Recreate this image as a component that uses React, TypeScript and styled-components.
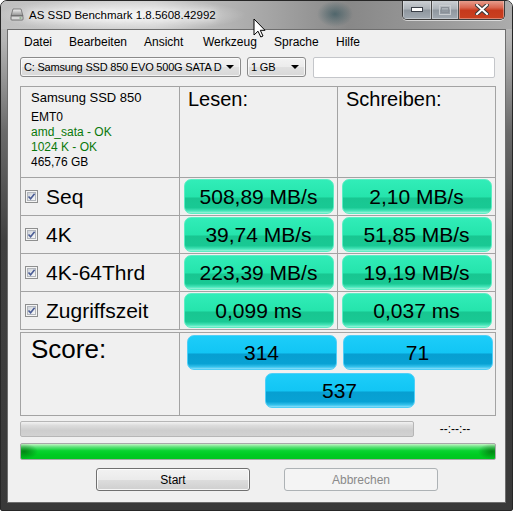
import React from 'react'
import styled, { createGlobalStyle } from 'styled-components'

const GlobalStyle = createGlobalStyle`
  html, body { margin: 0; padding: 0; background: #fff; }
  body { font-family: "Liberation Sans", Arial, sans-serif; }
  * { box-sizing: border-box; }
`

const Window = styled.div`
  position: relative;
  width: 513px;
  height: 511px;
  display: flex;
  flex-direction: column;
  border: 1px solid #262626;
  border-radius: 7px 7px 2px 2px;
  overflow: hidden;
  background: linear-gradient(180deg, #c6c6c6 0px, #b4b4b4 40px, #6a6a6a 130px, #404040 240px, #393939 100%);
`

const TitleBar = styled.div`
  height: 28px;
  flex: none;
  display: flex;
  align-items: flex-start;
  background:
    radial-gradient(ellipse 125px 17px at 120px 14px, rgba(255, 255, 255, 0.9), rgba(255, 255, 255, 0) 100%),
    radial-gradient(ellipse 18px 13px at 334px 13px, rgba(30, 70, 80, 0.55), rgba(30, 70, 80, 0) 100%),
    linear-gradient(90deg, #c0c0c0 0%, #cbcbcb 30%, #a6a6a6 52%, #888888 68%, #969696 82%, #acacac 100%);
`

const AppIcon = styled.svg`
  margin: 7px 0 0 9px;
  flex: none;
`

const Title = styled.div`
  margin-left: 5px;
  line-height: 28px;
  font-size: 11.5px;
  color: #000;
  text-shadow: 0 0 6px #fff, 0 0 10px #fff;
`

const CaptionButtons = styled.div`
  margin: -1px 7px 0 auto;
  display: flex;
  height: 20px;
  border: 1px solid #3c3c3c;
  border-top: none;
  border-radius: 0 0 5px 5px;
  overflow: hidden;
  box-shadow: 0 1px 0 rgba(255, 255, 255, 0.6);
`

const CaptionButton = styled.div<{ $w: number; $close?: boolean }>`
  width: ${p => p.$w}px;
  display: flex;
  align-items: center;
  justify-content: center;
  border-left: ${p => (p.$close ? '1px solid #5a3028' : 'none')};
  & + & { border-left: 1px solid #4a4a4a; }
  background: ${p =>
    p.$close
      ? 'linear-gradient(180deg, #e8a596 0%, #d8664f 40%, #c6391c 55%, #c9401f 100%)'
      : 'linear-gradient(180deg, #cfd3d7 0%, #aeb4ba 45%, #8f979f 55%, #a2aab2 100%)'};
  box-shadow: inset 0 0 0 1px rgba(255, 255, 255, 0.35);
`

const Client = styled.div`
  flex: 1;
  margin: 0 6px 7px;
  border: 1px solid #6e6e6e;
  background: #f0f0f0;
  display: flex;
  flex-direction: column;
`

const MenuBar = styled.div`
  height: 22px;
  display: flex;
  align-items: center;
  padding: 2px 0 0 9px;
  font-size: 12px;
  color: #000;
`

const MenuItem = styled.div<{ $w: number }>`
  width: ${p => p.$w}px;
  padding-left: 7px;
`

const Body = styled.div`
  padding-left: 12px;
  display: flex;
  flex-direction: column;
`

const ToolRow = styled.div`
  margin-top: 5px;
  height: 21px;
  display: flex;
  align-items: flex-start;
`

const Combo = styled.div<{ $w: number; $ml?: number }>`
  width: ${p => p.$w}px;
  height: 20px;
  margin-left: ${p => p.$ml ?? 0}px;
  border: 1px solid #8a8a8a;
  border-radius: 3px;
  background: linear-gradient(180deg, #f3f3f3 0%, #ececec 50%, #e0e0e0 51%, #d8d8d8 100%);
  box-shadow: inset 0 0 0 1px rgba(255, 255, 255, 0.7);
  display: flex;
  align-items: center;
  padding: 0 6px 0 3px;
  font-size: 11px;
  letter-spacing: -0.2px;
  color: #000;
`

const ComboText = styled.div`
  flex: 1;
  overflow: hidden;
  white-space: nowrap;
`

const Arrow = styled.div`
  flex: none;
  width: 0;
  height: 0;
  margin-left: 4px;
  border-left: 4px solid transparent;
  border-right: 4px solid transparent;
  border-top: 4px solid #000;
`

const TextBox = styled.div`
  margin-left: 7px;
  width: 182px;
  height: 21px;
  background: #fff;
  border: 1px solid #c4c6ca;
  border-radius: 2px;
`

const MainGrid = styled.div`
  margin-top: 8px;
  width: 476px;
  display: grid;
  grid-template-columns: 158px 157px 157px;
  grid-template-rows: 90px repeat(4, 37px);
  gap: 1px;
  padding: 1px;
  background: #a3a3a3;
`

const ScoreGrid = styled.div`
  margin-top: 2px;
  width: 476px;
  display: grid;
  grid-template-columns: 158px 315px;
  grid-template-rows: 82px;
  gap: 1px;
  padding: 1px;
  background: #a3a3a3;
`

const Cell = styled.div`
  background: #f0f0f0;
  display: flex;
  align-items: center;
  justify-content: center;
`

const InfoCell = styled(Cell)`
  flex-direction: column;
  align-items: flex-start;
  justify-content: flex-start;
  padding: 3px 0 0 10px;
`

const DriveName = styled.div`
  font-size: 13px;
  line-height: 16px;
  margin-bottom: 4px;
`

const InfoLine = styled.div<{ $ok?: boolean }>`
  font-size: 12px;
  line-height: 15px;
  color: ${p => (p.$ok ? '#0a780a' : '#000')};
`

const HeadCell = styled(Cell)`
  align-items: flex-start;
  justify-content: flex-start;
  padding: 1px 0 0 8px;
  font-size: 20px;
  line-height: 22px;
`

const LabelCell = styled(Cell)`
  justify-content: flex-start;
  padding-left: 4px;
  font-size: 21px;
  gap: 8px;
`

const CheckBox = styled.span`
  width: 13px;
  height: 13px;
  flex: none;
  border: 1px solid #8e8f8f;
  background: #f4f4f4;
  display: flex;
  align-items: center;
  justify-content: center;
  padding: 1px;
`

const CheckInner = styled.span`
  width: 9px;
  height: 9px;
  border: 1px solid #b2b6bc;
  background: linear-gradient(135deg, #cdd1d8 0%, #eceef0 70%, #f8f8f8 100%);
  position: relative;
  display: block;
`

const Tick = styled.svg`
  position: absolute;
  left: -1px;
  top: -1px;
`

const Pill = styled.div<{ $tone: 'green' | 'blue' }>`
  width: 150px;
  height: 35px;
  border-radius: 7px;
  display: flex;
  align-items: center;
  justify-content: center;
  font-size: 21px;
  color: #000;
  border: 1px solid ${p => (p.$tone === 'green' ? '#5aeec3' : '#4fcff7')};
  background: ${p =>
    p.$tone === 'green'
      ? 'linear-gradient(180deg, #31edb8 0%, #25e4ac 52%, #18c691 54%, #19c994 84%, #48e7bb 94%, #9ef4da 100%)'
      : 'linear-gradient(180deg, #1ccdf9 0%, #12c5f4 52%, #079fd1 54%, #08a2d4 84%, #37c4ee 94%, #8fe0fa 100%)'};
`

const ScoreLabel = styled(Cell)`
  align-items: flex-start;
  justify-content: flex-start;
  padding: 1px 0 0 10px;
  font-size: 26px;
  line-height: 30px;
`

const ScoreCell = styled(Cell)`
  align-items: flex-start;
  padding-top: 2px;
`

const ScoreBoxes = styled.div`
  display: grid;
  grid-template-columns: 150px 150px;
  column-gap: 6px;
  row-gap: 3px;
  margin-left: 4px;
  & > :nth-child(3) {
    grid-column: 1 / -1;
    justify-self: center;
  }
`

const ProgressRow = styled.div`
  margin-top: 5px;
  height: 16px;
  width: 476px;
  display: flex;
  align-items: center;
`

const EmptyBar = styled.div`
  width: 394px;
  height: 16px;
  border: 1px solid #b6b6b6;
  border-radius: 2px;
  background: linear-gradient(180deg, #f2f2f2 0%, #dcdcdc 25%, #cdcdcd 60%, #d2d2d2 100%);
`

const TimeText = styled.div`
  flex: 1;
  text-align: center;
  font-size: 12px;
  color: #000;
`

const FullBar = styled.div`
  margin-top: 6px;
  width: 476px;
  height: 17px;
  border: 1px solid #a8a8a8;
  border-radius: 2px;
  background:
    radial-gradient(ellipse 14px 8px at 3px 50%, rgba(0, 70, 0, 0.55), rgba(0, 70, 0, 0)),
    radial-gradient(ellipse 14px 8px at calc(100% - 3px) 50%, rgba(0, 70, 0, 0.55), rgba(0, 70, 0, 0)),
    linear-gradient(180deg, #c6f5c6 0%, #5fe27a 20%, #09d330 45%, #00cc23 70%, #00c620 100%);
`

const ButtonRow = styled.div`
  margin-top: 8px;
  padding-left: 76px;
  display: flex;
  gap: 34px;
`

const Button = styled.div<{ $disabled?: boolean }>`
  width: 154px;
  height: 23px;
  border-radius: 3px;
  display: flex;
  align-items: center;
  justify-content: center;
  font-size: 12px;
  border: 1px solid ${p => (p.$disabled ? '#adb2b5' : '#707070')};
  color: ${p => (p.$disabled ? '#8a8a8a' : '#000')};
  background: ${p =>
    p.$disabled ? '#f4f4f4' : 'linear-gradient(180deg, #f2f2f2 0%, #ebebeb 50%, #dddddd 51%, #cfcfcf 100%)'};
  box-shadow: ${p => (p.$disabled ? 'none' : 'inset 0 0 0 1px rgba(255, 255, 255, 0.8)')};
`

const Cursor = styled.svg`
  position: absolute;
  left: 252px;
  top: 17px;
`

const menu: [string, number][] = [
  ['Datei', 45],
  ['Bearbeiten', 75],
  ['Ansicht', 59],
  ['Werkzeug', 71],
  ['Sprache', 62],
  ['Hilfe', 40],
]

const rows = [
  { name: 'Seq', read: '508,89 MB/s', write: '2,10 MB/s' },
  { name: '4K', read: '39,74 MB/s', write: '51,85 MB/s' },
  { name: '4K-64Thrd', read: '223,39 MB/s', write: '19,19 MB/s' },
  { name: 'Zugriffszeit', read: '0,099 ms', write: '0,037 ms' },
]

const Check = () => (
  <CheckBox>
    <CheckInner>
      <Tick width="9" height="9" viewBox="0 0 9 9">
        <path d="M1.5 4.5 L3.6 6.8 L7.6 1.8" fill="none" stroke="#4b5d95" strokeWidth="1.6" />
      </Tick>
    </CheckInner>
  </CheckBox>
)

export default function App() {
  return (
    <>
      <GlobalStyle />
      <Window>
        <TitleBar>
          <AppIcon width="14" height="13" viewBox="0 0 14 13">
            <defs>
              <linearGradient id="hdd" x1="0" y1="0" x2="0" y2="1">
                <stop offset="0" stopColor="#f4f4f4" />
                <stop offset="1" stopColor="#8a8a8a" />
              </linearGradient>
            </defs>
            <path d="M3 1 H11 L13 8 H1 Z" fill="url(#hdd)" stroke="#6a6a6a" strokeWidth="0.8" />
            <rect x="1" y="8" width="12" height="4" rx="0.8" fill="#d8d8d8" stroke="#5a5a5a" strokeWidth="0.8" />
            <rect x="9.5" y="9.4" width="2" height="1.2" fill="#6c9c6c" />
          </AppIcon>
          <Title>AS SSD Benchmark 1.8.5608.42992</Title>
          <CaptionButtons>
            <CaptionButton $w={28}>
              <svg width="12" height="5" viewBox="0 0 12 5">
                <rect x="0.5" y="0.5" width="11" height="4" fill="#fff" stroke="#3a3f48" />
              </svg>
            </CaptionButton>
            <CaptionButton $w={27}>
              <svg width="12" height="10" viewBox="0 0 12 10">
                <rect x="0.5" y="0.5" width="11" height="9" fill="none" stroke="#c8ccd0" />
                <rect x="2.5" y="2.5" width="7" height="5" fill="none" stroke="#8a9098" />
              </svg>
            </CaptionButton>
            <CaptionButton $w={46} $close>
              <svg width="14" height="11" viewBox="0 0 14 11">
                <path d="M2 1 L12 10 M12 1 L2 10" stroke="#3a3a3a" strokeWidth="4" strokeLinecap="square" />
                <path d="M2 1 L12 10 M12 1 L2 10" stroke="#fff" strokeWidth="2" strokeLinecap="square" />
              </svg>
            </CaptionButton>
          </CaptionButtons>
        </TitleBar>
        <Client>
          <MenuBar>
            {menu.map(([label, w]) => (
              <MenuItem key={label} $w={w}>
                {label}
              </MenuItem>
            ))}
          </MenuBar>
          <Body>
            <ToolRow>
              <Combo $w={221}>
                <ComboText>C: Samsung SSD 850 EVO 500G SATA D</ComboText>
                <Arrow />
              </Combo>
              <Combo $w={59} $ml={6}>
                <ComboText>1 GB</ComboText>
                <Arrow />
              </Combo>
              <TextBox />
            </ToolRow>
            <MainGrid>
              <InfoCell>
                <DriveName>Samsung SSD 850</DriveName>
                <InfoLine>EMT0</InfoLine>
                <InfoLine $ok>amd_sata - OK</InfoLine>
                <InfoLine $ok>1024 K - OK</InfoLine>
                <InfoLine>465,76 GB</InfoLine>
              </InfoCell>
              <HeadCell>Lesen:</HeadCell>
              <HeadCell>Schreiben:</HeadCell>
              {rows.map(r => (
                <React.Fragment key={r.name}>
                  <LabelCell>
                    <Check />
                    {r.name}
                  </LabelCell>
                  <Cell>
                    <Pill $tone="green">{r.read}</Pill>
                  </Cell>
                  <Cell>
                    <Pill $tone="green">{r.write}</Pill>
                  </Cell>
                </React.Fragment>
              ))}
            </MainGrid>
            <ScoreGrid>
              <ScoreLabel>Score:</ScoreLabel>
              <ScoreCell>
                <ScoreBoxes>
                  <Pill $tone="blue">314</Pill>
                  <Pill $tone="blue">71</Pill>
                  <Pill $tone="blue">537</Pill>
                </ScoreBoxes>
              </ScoreCell>
            </ScoreGrid>
            <ProgressRow>
              <EmptyBar />
              <TimeText>--:--:--</TimeText>
            </ProgressRow>
            <FullBar />
            <ButtonRow>
              <Button>Start</Button>
              <Button $disabled>Abbrechen</Button>
            </ButtonRow>
          </Body>
        </Client>
        <Cursor width="13" height="20" viewBox="0 0 13 20">
          <path d="M1 1 L1 17 L5 13.2 L7.8 19 L10 18 L7.3 12.3 L12 12.3 Z" fill="#fff" stroke="#000" strokeWidth="1" strokeLinejoin="round" />
        </Cursor>
      </Window>
    </>
  )
}
